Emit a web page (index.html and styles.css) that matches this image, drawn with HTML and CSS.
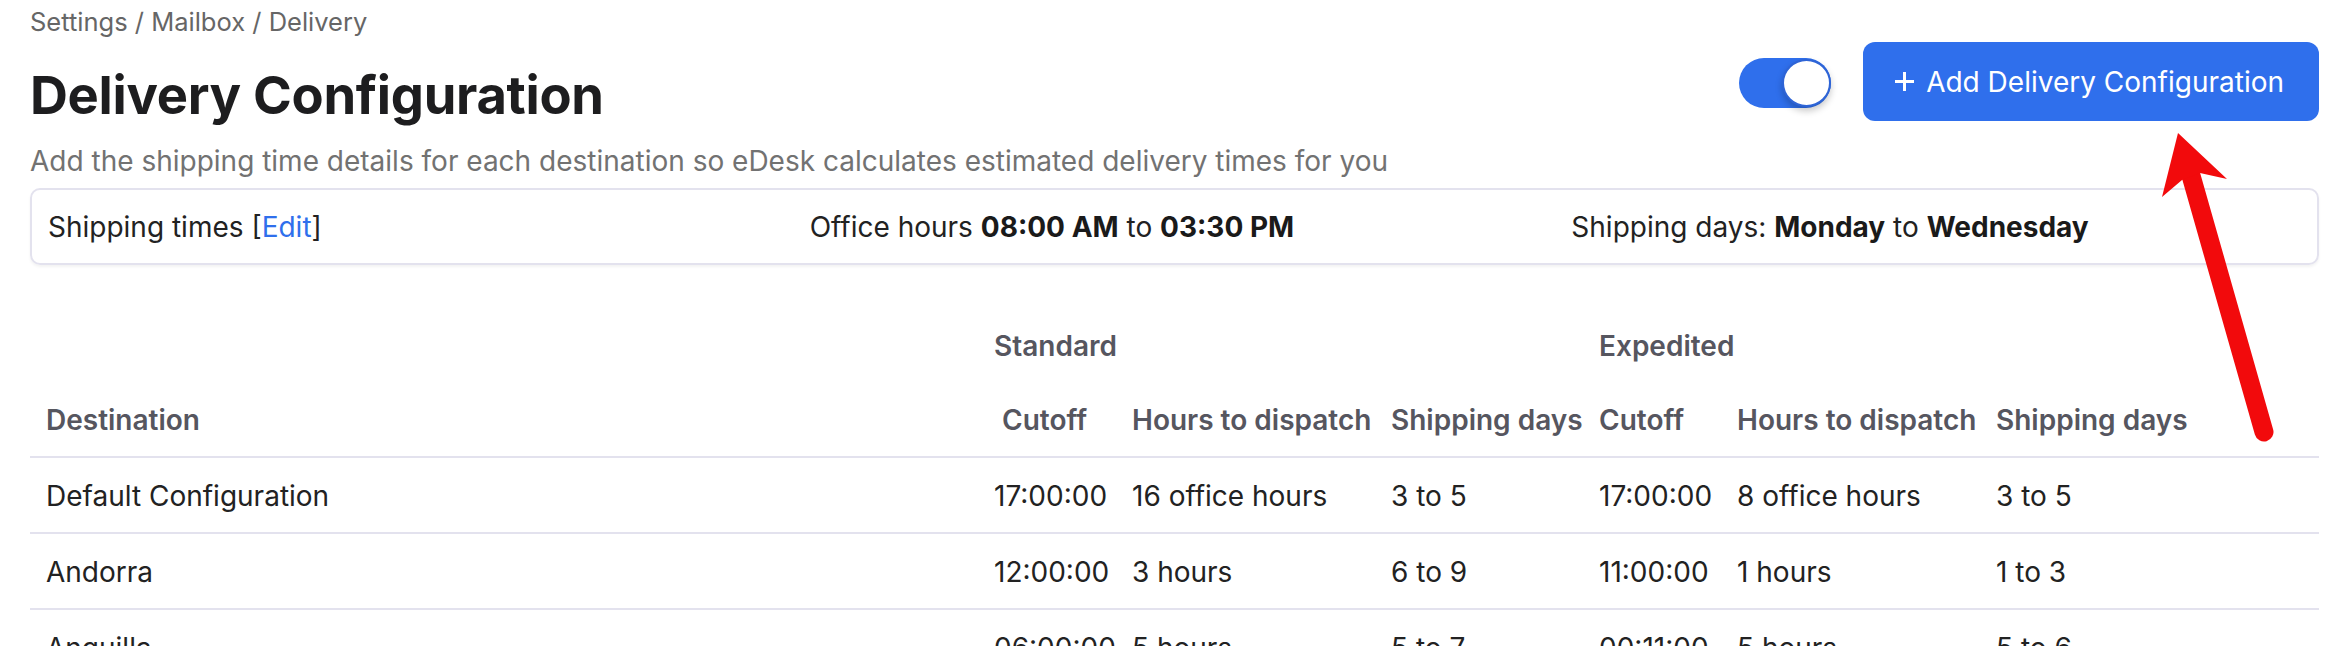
FILE: index.html
```html
<!DOCTYPE html>
<html lang="en">
<head>
<meta charset="utf-8">
<title>Delivery Configuration</title>
<link rel="stylesheet" href="styles.css">
</head>
<body>
<div class="page">
  <div class="breadcrumb">Settings / Mailbox / Delivery</div>
  <div class="header">
    <div class="heading">
      <h1 class="title">Delivery Configuration</h1>
      <p class="subtitle">Add the shipping time details for each destination so eDesk calculates estimated delivery times for you</p>
    </div>
    <div class="actions">
      <div class="toggle"><span class="knob"></span></div>
      <button class="btn-add">
        <svg class="plus" width="21" height="21" viewBox="0 0 21 21"><path d="M10.5 1v19M1 10.5h19" stroke="#fff" stroke-width="3" fill="none"/></svg>
        <span>Add Delivery Configuration</span>
      </button>
    </div>
  </div>

  <div class="summary">
    <div class="summary-col">Shipping times [<a class="link" href="#">Edit</a>]</div>
    <div class="summary-col">Office hours <b>08:00 AM</b> to <b>03:30 PM</b></div>
    <div class="summary-col">Shipping days: <b>Monday</b> to <b>Wednesday</b></div>
  </div>

  <table class="grid">
    <colgroup>
      <col class="c-dest"><col class="c-cut"><col class="c-hrs"><col class="c-days">
      <col class="c-cut2"><col class="c-hrs2"><col class="c-days2"><col class="c-act">
    </colgroup>
    <thead>
      <tr class="group-row">
        <th></th>
        <th colspan="3">Standard</th>
        <th colspan="3">Expedited</th>
        <th></th>
      </tr>
      <tr class="col-row">
        <th>Destination</th>
        <th class="shift">Cutoff</th>
        <th>Hours to dispatch</th>
        <th>Shipping days</th>
        <th>Cutoff</th>
        <th>Hours to dispatch</th>
        <th>Shipping days</th>
        <th></th>
      </tr>
    </thead>
    <tbody>
      <tr>
        <td>Default Configuration</td><td>17:00:00</td><td>16 office hours</td><td>3 to 5</td>
        <td>17:00:00</td><td>8 office hours</td><td>3 to 5</td><td></td>
      </tr>
      <tr>
        <td>Andorra</td><td>12:00:00</td><td>3 hours</td><td>6 to 9</td>
        <td>11:00:00</td><td>1 hours</td><td>1 to 3</td><td></td>
      </tr>
      <tr>
        <td>Anguilla</td><td>06:00:00</td><td>5 hours</td><td>5 to 7</td>
        <td>00:11:00</td><td>5 hours</td><td>5 to 6</td><td></td>
      </tr>
    </tbody>
  </table>
</div>

<svg class="annotation" width="2344" height="646" viewBox="0 0 2344 646">
  <line x1="2190" y1="172" x2="2264" y2="432" stroke="#f20a0c" stroke-width="19" stroke-linecap="round"/>
  <polygon points="2178,133 2227,179 2200,173 2182,180 2162,197" fill="#f20a0c"/>
</svg>
</body>
</html>
```

FILE: styles.css
```css
* { box-sizing: border-box; }

html, body {
  margin: 0;
  background: #ffffff;
  font-family: Inter, "Noto Sans", "Liberation Sans", sans-serif;
  color: #222222;
}

body { position: relative; overflow: hidden; height: 646px; }

.page {
  padding: 0 25px 0 30px;
}

.breadcrumb {
  padding-top: 7px;
  font-size: 25.5px;
  line-height: 30px;
  color: #666666;
}

.header {
  display: flex;
  justify-content: space-between;
  align-items: flex-start;
}

.title {
  margin: 0;
  padding-top: 28px;
  font-size: 52.5px;
  line-height: 60px;
  font-weight: 700;
  color: #1d1d1f;
  letter-spacing: -0.3px;
}

.subtitle {
  margin: 20px 0 0;
  font-size: 28px;
  line-height: 32px;
  color: #727272;
}

.actions {
  display: flex;
  align-items: center;
  gap: 32px;
  margin-top: 5px;
}

.toggle {
  width: 92px;
  height: 50px;
  border-radius: 25px;
  background: #2f6fec;
  display: flex;
  justify-content: flex-end;
  align-items: center;
  margin-top: 3px;
}

.knob {
  width: 49px;
  height: 48px;
  border-radius: 50%;
  background: #ffffff;
  border: 2px solid #2e64d6;
  box-shadow: 0 4px 7px rgba(0, 0, 0, 0.22);
}

.btn-add {
  display: flex;
  align-items: center;
  gap: 11px;
  height: 79px;
  padding: 0 35px 0 31px;
  border: none;
  border-radius: 12px;
  background: #2f6fec;
  color: #ffffff;
  font-family: inherit;
  font-size: 28px;
  line-height: 32px;
}

.plus { display: block; }

.summary {
  margin-top: 11px;
  height: 77px;
  border: 2px solid #e3e2ee;
  border-radius: 10px;
  box-shadow: 0 2px 3px rgba(0, 0, 0, 0.05);
  display: grid;
  grid-template-columns: 1fr 1fr 1fr;
  align-items: center;
  font-size: 28px;
  line-height: 32px;
  color: #222222;
}

.summary-col { padding-left: 16px; white-space: nowrap; }

.summary b { font-weight: 700; color: #1a1a1a; }

.link { color: #2f6fec; text-decoration: none; }

.grid {
  margin-top: 41.5px;
  width: 2289px;
  border-collapse: collapse;
  table-layout: fixed;
  font-size: 28px;
  line-height: 32px;
}

.c-dest { width: 955px; }
.c-cut { width: 138px; }
.c-hrs { width: 259px; }
.c-days { width: 208px; }
.c-cut2 { width: 138px; }
.c-hrs2 { width: 259px; }
.c-days2 { width: 223px; }
.c-act { width: 109px; }

.grid th, .grid td {
  text-align: left;
  padding: 0 0 0 9px;
  white-space: nowrap;
  vertical-align: middle;
}

.grid th:first-child, .grid td:first-child { padding-left: 16px; }

.grid th {
  font-size: 28px;
  font-weight: 600;
  color: #56565f;
}

.group-row th { height: 78px; }

.col-row th {
  height: 72px;
  border-bottom: 2px solid #e3e2ee;
}

.col-row th.shift { padding-left: 17px; }

.grid td {
  height: 76px;
  padding-top: 3px;
  border-bottom: 2px solid #e3e2ee;
  color: #222222;
}

.grid td:first-child { padding-top: 3px; }

.annotation {
  position: absolute;
  left: 0;
  top: 0;
  pointer-events: none;
}
```
